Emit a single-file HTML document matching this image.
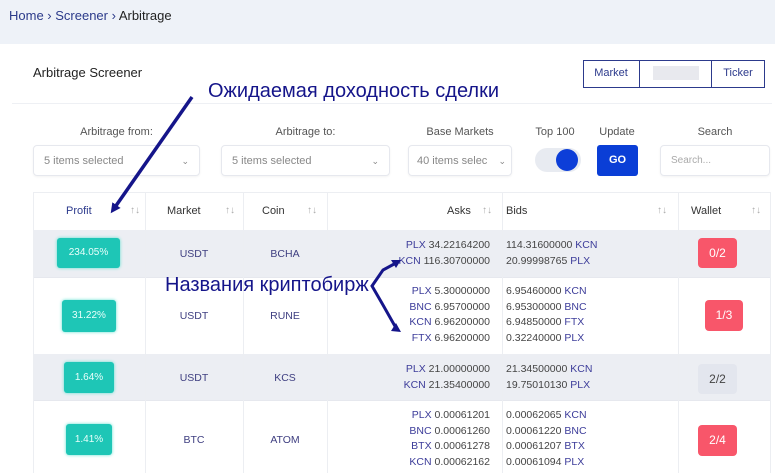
<!DOCTYPE html><html><head><meta charset="utf-8"><style>
body{margin:0;width:775px;height:473px;overflow:hidden;background:#fff;font-family:"Liberation Sans",sans-serif;position:relative;color:#333}
.a{position:absolute}
.top{left:0;top:0;width:775px;height:44px;background:#eef2f8}
.lbl{font-size:11px;color:#555;text-align:center}
.sel{border:1px solid #e6e8ee;border-radius:4px;font-size:11px;color:#888;box-sizing:border-box;padding:0 10px;line-height:30px;box-shadow:0 1px 2px rgba(0,0,0,.05)}
.sel span{position:absolute;right:10px;top:0;font-size:9px}
.th{font-size:11px;color:#333;top:192px;height:38px;line-height:38px}
.srt{color:#aaa;font-size:10px;position:absolute}
.row{left:33px;width:737px}
.vl{position:absolute;top:192px;width:1px;background:#eceef2}
.c{font-size:10.5px;color:#3e3e80;text-align:center}
.badge{background:#1ec6b6;color:#e9fffb;font-size:10px;text-align:center;border-radius:3px;box-shadow:0 0 3px #5de0d0}
.red{background:#f8566a;color:#fff;font-size:12px;text-align:center;border-radius:4px}
.num{font-size:10.5px;line-height:15.5px;color:#444}
.num b{font-weight:normal;color:#3d3d9a}
.ann{color:#15158a;font-size:20px}
</style></head><body>
<div class="a top"></div>
<div class="a" style="left:9px;top:8px;font-size:13px;color:#2b3a8a">Home › Screener › <span style="color:#222">Arbitrage</span></div>
<div class="a" style="left:33px;top:65px;font-size:13px;color:#222">Arbitrage Screener</div>
<div class="a" style="left:583px;top:60px;width:182px;height:28px;border:1px solid #2c3a8c;box-sizing:border-box"></div>
<div class="a" style="left:639px;top:60px;width:1px;height:28px;background:#2c3a8c"></div>
<div class="a" style="left:711px;top:60px;width:1px;height:28px;background:#2c3a8c"></div>
<div class="a" style="left:583px;top:67px;width:56px;text-align:center;font-size:11px;color:#2c3a8c">Market</div>
<div class="a" style="left:653px;top:66px;width:46px;height:14px;background:#e8e9ee"></div>
<div class="a" style="left:711px;top:67px;width:54px;text-align:center;font-size:11px;color:#2c3a8c">Ticker</div>
<div class="a" style="left:12px;top:103px;width:760px;height:1px;background:#eef0f4"></div>
<div class="a lbl" style="left:33px;top:126px;width:167px">Arbitrage from:</div>
<div class="a lbl" style="left:221px;top:126px;width:169px">Arbitrage to:</div>
<div class="a lbl" style="left:408px;top:126px;width:104px">Base Markets</div>
<div class="a lbl" style="left:530px;top:126px;width:50px">Top 100</div>
<div class="a lbl" style="left:592px;top:126px;width:50px">Update</div>
<div class="a lbl" style="left:660px;top:126px;width:110px">Search</div>
<div class="a sel" style="left:33px;top:145px;width:167px;height:31px">5 items selected<span>⌄</span></div>
<div class="a sel" style="left:221px;top:145px;width:169px;height:31px">5 items selected<span>⌄</span></div>
<div class="a sel" style="left:408px;top:145px;width:104px;height:31px;padding:0 8px;white-space:nowrap;overflow:hidden">40 items selec<span style="right:5px">⌄</span></div>
<div class="a" style="left:535px;top:148px;width:46px;height:24px;border-radius:12px;background:#e8ebf1"></div>
<div class="a" style="left:556px;top:149px;width:22px;height:22px;border-radius:11px;background:#0d3ed8"></div>
<div class="a" style="left:597px;top:145px;width:41px;height:31px;background:#0a3ed6;border-radius:3px;color:#fff;font-size:11px;font-weight:bold;text-align:center;line-height:31px">GO</div>
<div class="a sel" style="left:660px;top:145px;width:110px;height:31px;font-size:10px;color:#aaa">Search...</div>
<div class="a row" style="top:192px;height:38px;border-top:1px solid #eceef2;box-sizing:border-box"></div>
<div class="a row" style="top:230px;height:47px;background:#eceef3"></div>
<div class="a row" style="top:354px;height:46px;background:#eceef3"></div>
<div class="a row" style="top:277px;height:1px;background:#e6e8ee"></div>
<div class="a row" style="top:400px;height:1px;background:#e6e8ee"></div>
<div class="vl" style="left:33px;height:281px"></div>
<div class="vl" style="left:145px;height:281px"></div>
<div class="vl" style="left:243px;height:281px"></div>
<div class="vl" style="left:327px;height:281px"></div>
<div class="vl" style="left:502px;height:281px"></div>
<div class="vl" style="left:678px;height:281px"></div>
<div class="vl" style="left:770px;height:281px"></div>
<div class="a th" style="left:66px;color:#2c3a8c">Profit</div><div class="srt" style="left:130px;top:205px">↑↓</div>
<div class="a th" style="left:167px">Market</div><div class="srt" style="left:225px;top:205px">↑↓</div>
<div class="a th" style="left:262px">Coin</div><div class="srt" style="left:307px;top:205px">↑↓</div>
<div class="a th" style="left:447px">Asks</div><div class="srt" style="left:482px;top:205px">↑↓</div>
<div class="a th" style="left:506px">Bids</div><div class="srt" style="left:657px;top:205px">↑↓</div>
<div class="a th" style="left:691px">Wallet</div><div class="srt" style="left:751px;top:205px">↑↓</div>
<div class="a badge" style="left:57px;top:238px;width:63px;height:30px;line-height:30px">234.05%</div>
<div class="a c" style="left:145px;top:248px;width:98px">USDT</div>
<div class="a c" style="left:243px;top:248px;width:84px">BCHA</div>
<div class="a num" style="left:340px;top:238px;width:150px;text-align:right"><b>PLX</b> 34.22164200<br><b>KCN</b> 116.30700000</div>
<div class="a num" style="left:506px;top:238px"><span>114.31600000 <b>KCN</b></span><br>20.99998765 <b>PLX</b></div>
<div class="a red" style="left:698px;top:238px;width:39px;height:30px;line-height:30px">0/2</div>
<div class="a badge" style="left:62px;top:300px;width:54px;height:32px;line-height:32px">31.22%</div>
<div class="a c" style="left:145px;top:310px;width:98px">USDT</div>
<div class="a c" style="left:243px;top:310px;width:84px">RUNE</div>
<div class="a num" style="left:340px;top:284px;width:150px;text-align:right"><b>PLX</b> 5.30000000<br><b>BNC</b> 6.95700000<br><b>KCN</b> 6.96200000<br><b>FTX</b> 6.96200000</div>
<div class="a num" style="left:506px;top:284px">6.95460000 <b>KCN</b><br>6.95300000 <b>BNC</b><br>6.94850000 <b>FTX</b><br>0.32240000 <b>PLX</b></div>
<div class="a red" style="left:705px;top:300px;width:38px;height:31px;line-height:31px">1/3</div>
<div class="a badge" style="left:64px;top:362px;width:50px;height:31px;line-height:31px">1.64%</div>
<div class="a c" style="left:145px;top:372px;width:98px">USDT</div>
<div class="a c" style="left:243px;top:372px;width:84px">KCS</div>
<div class="a num" style="left:340px;top:362px;width:150px;text-align:right"><b>PLX</b> 21.00000000<br><b>KCN</b> 21.35400000</div>
<div class="a num" style="left:506px;top:362px">21.34500000 <b>KCN</b><br>19.75010130 <b>PLX</b></div>
<div class="a" style="left:698px;top:364px;width:39px;height:30px;line-height:30px;background:#e3e6ee;border-radius:4px;text-align:center;font-size:12px;color:#444">2/2</div>
<div class="a badge" style="left:66px;top:424px;width:46px;height:31px;line-height:31px">1.41%</div>
<div class="a c" style="left:145px;top:434px;width:98px">BTC</div>
<div class="a c" style="left:243px;top:434px;width:84px">ATOM</div>
<div class="a num" style="left:340px;top:408px;width:150px;text-align:right"><b>PLX</b> 0.00061201<br><b>BNC</b> 0.00061260<br><b>BTX</b> 0.00061278<br><b>KCN</b> 0.00062162</div>
<div class="a num" style="left:506px;top:408px">0.00062065 <b>KCN</b><br>0.00061220 <b>BNC</b><br>0.00061207 <b>BTX</b><br>0.00061094 <b>PLX</b></div>
<div class="a red" style="left:698px;top:425px;width:39px;height:31px;line-height:31px">2/4</div>
<div class="a ann" style="left:208px;top:80px">Ожидаемая доходность сделки</div>
<div class="a ann" style="left:165px;top:274px">Названия криптобирж</div>
<svg class="a" style="left:0;top:0" width="775" height="473">
<defs><marker id="m" markerWidth="10" markerHeight="10" refX="6" refY="5" orient="auto" markerUnits="userSpaceOnUse"><path d="M0,0 L10,5 L0,10z" fill="#15158a"/></marker></defs>
<g stroke="#15158a" stroke-width="3.5" fill="none">
<line x1="192" y1="97" x2="113" y2="210" marker-end="url(#m)"/>
<polyline points="396,263 383,270 372,286 383,305 396,328" stroke-width="3"/>
</g>
<path d="M401,260 l-10,0 5,8z M401,332 l-10,-1 5,-8z" fill="#15158a"/>
</svg>
</body></html>
